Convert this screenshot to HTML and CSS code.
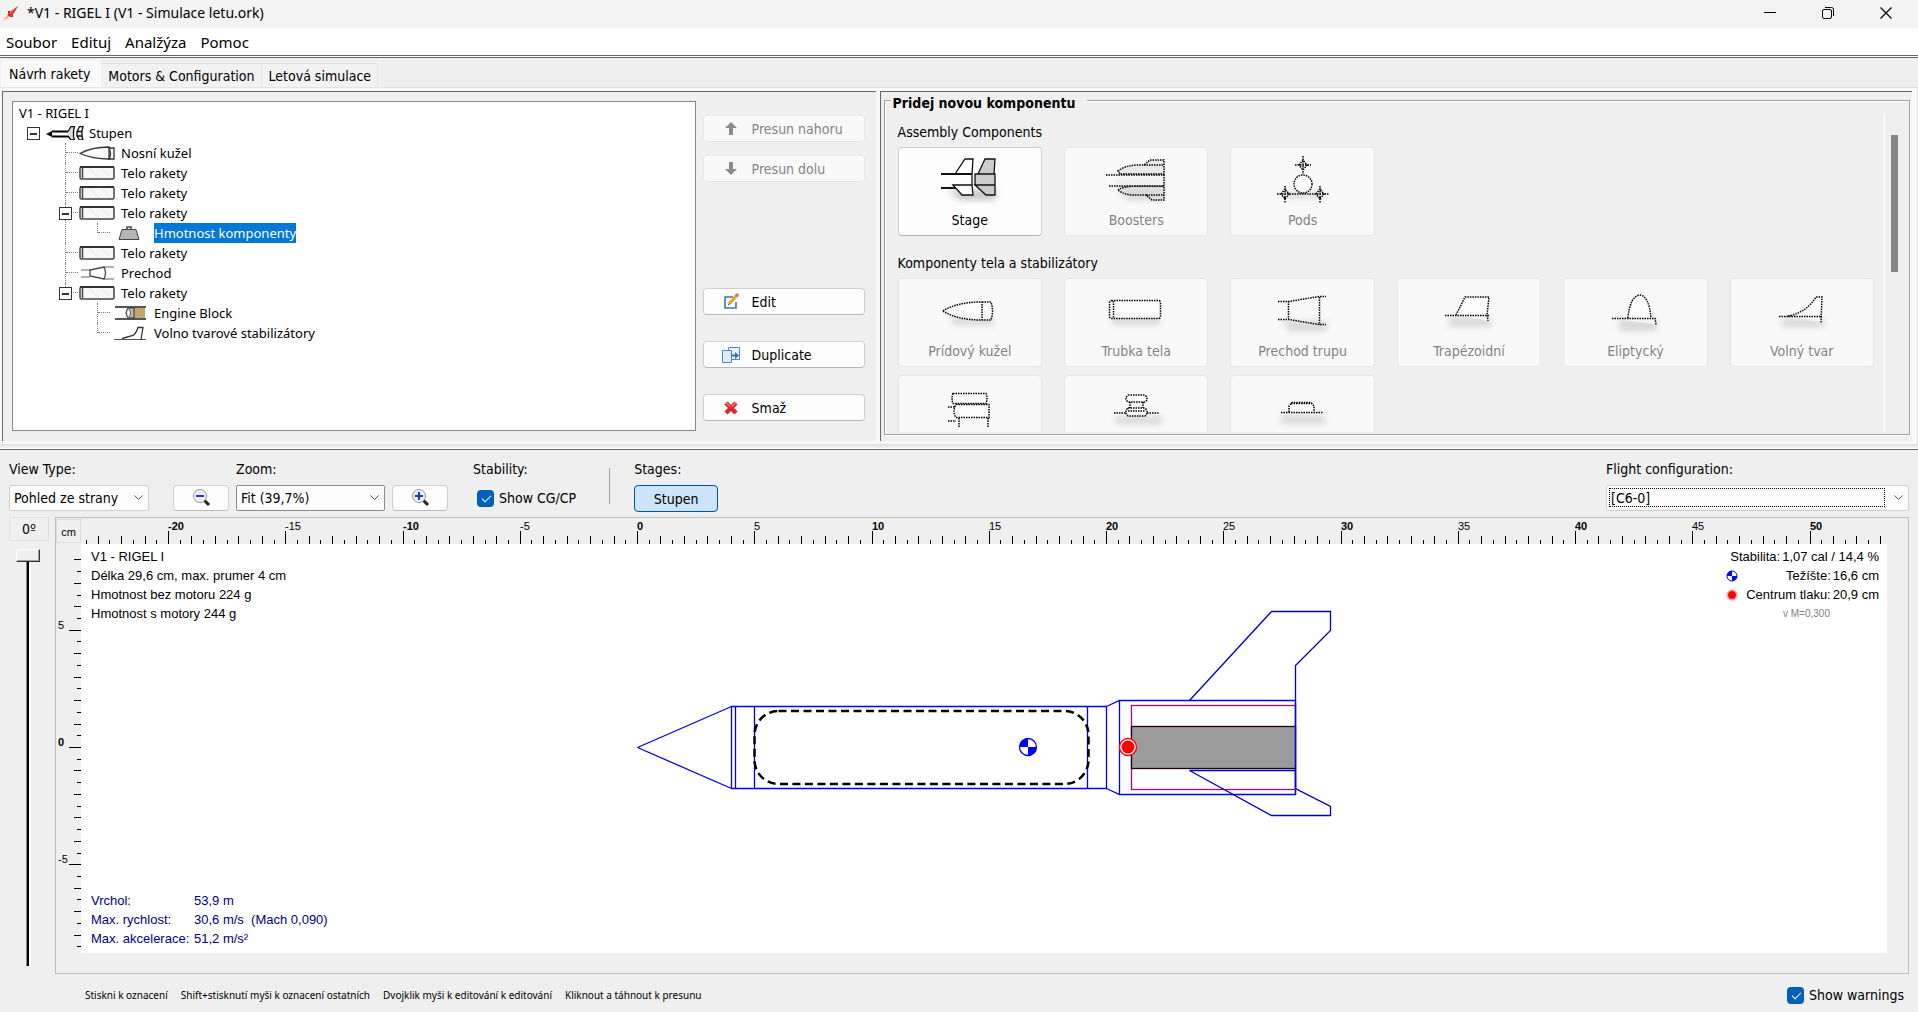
FILE: index.html
```html
<!DOCTYPE html>
<html lang="cs">
<head>
<meta charset="utf-8">
<title>*V1 - RIGEL I (V1 - Simulace letu.ork)</title>
<link rel="stylesheet" href="styles.css">
</head>
<body>
<header class="titlebar">
  <svg class="app-icon" width="16" height="16" viewBox="0 0 16 16"><path d="M15 1 L9 5 L4 10 L7 12 L11 8Z" fill="#e0261c"/><path d="M12 3l-5 6" stroke="#f9b0a0" stroke-width="1"/><path d="M5 6l3 0-3 3zM10 9v3l-3 0z" fill="#c2281c"/><path d="M4 11l-4 5 6-4z" fill="#f6a13a"/></svg>
  <h1 class="window-title">*V1 - RIGEL I (V1 - Simulace letu.ork)</h1>
  <div class="window-controls">
    <button class="window-btn" aria-label="Minimalizovat"><svg width="12" height="12"><path d="M0 5.500h12" stroke="#000"/></svg></button>
    <button class="window-btn" aria-label="Obnovit"><svg width="12" height="12" fill="none" stroke="#000"><rect x=".5" y="2.500" width="9" height="9" rx="1.500"/><path d="M3 .5h6.500a2 2 0 0 1 2 2v6.500"/></svg></button>
    <button class="window-btn" aria-label="Zavřít"><svg width="12" height="12"><path d="M.5.5l11 11M11.500.5l-11 11" stroke="#000" stroke-width="1.200"/></svg></button>
  </div>
</header>
<nav class="menubar">
  <a href="#">Soubor</a><a href="#">Edituj</a><a href="#">Analžýza</a><a href="#">Pomoc</a>
</nav>
<div class="tabs" role="tablist">
  <button class="tab tab-active" role="tab" aria-selected="true">Návrh rakety</button>
  <button class="tab" role="tab">Motors &amp; Configuration</button>
  <button class="tab" role="tab">Letová simulace</button>
</div>

<svg class="symbols" aria-hidden="true">
  <symbol id="tube" viewBox="0 0 36 14"><rect x="1" y="1" width="34" height="12" rx="1.500" fill="#f7f7f7" stroke="#444" stroke-width="1.500"/><path d="M1 1h34" stroke="#333" stroke-width="2"/><path d="M3.500 2v10" stroke="#444" stroke-width="1.500"/><path d="M10 2l10 10M22 2l8 8" stroke="#e4e4e4"/></symbol>
</svg>

<main class="design">
  <section class="panel structure">
    <div class="tree-box">
      <p class="tree-root">V1 - RIGEL I</p>
      <ul class="tree">
        <li>
          <div class="node"><button class="expander" aria-label="Sbalit"></button><svg class="node-icon wide" width="38" height="14" viewBox="0 0 38 14"><path d="M0 8l6-3v6z"/><path d="M4 8h2M6 5.500h17M6 10.500h17" stroke="#000" stroke-width="2" fill="none"/><path d="M22 5.500l3-5h3.500l-1 4.500v6l1 3H25l-3-4" fill="#ddd" stroke="#111" stroke-width="1.300"/><path d="M31 5.500l2.500-5H37l-1 4.500v5l1 4h-3.500l-2.500-4zM31 5.500h5M31 10h5" fill="#eee" stroke="#111" stroke-width="1.300"/></svg><span class="node-label">Stupen</span></div>
          <ul>
            <li><div class="node"><svg class="node-icon" width="36" height="14" viewBox="0 0 36 14" fill="#fafafa" stroke="#333"><path d="M1 7.500C9 3 20 1 30 1v12C20 13 9 11 1 7.500z" stroke-width="1.300"/><path d="M30 2h5v11h-5q3-5 0-11" stroke-width="1.300"/></svg><span class="node-label">Nosní kužel</span></div></li>
            <li><div class="node"><svg class="node-icon" width="36" height="14"><use href="#tube"/></svg><span class="node-label">Telo rakety</span></div></li>
            <li><div class="node"><svg class="node-icon" width="36" height="14"><use href="#tube"/></svg><span class="node-label">Telo rakety</span></div></li>
            <li>
              <div class="node"><button class="expander" aria-label="Sbalit"></button><svg class="node-icon" width="36" height="14"><use href="#tube"/></svg><span class="node-label">Telo rakety</span></div>
              <ul>
                <li><div class="node"><svg class="node-icon" width="34" height="14" viewBox="0 0 34 14"><path d="M9 3.500h14l3 10H6z" fill="#b5b5b5" stroke="#444"/><path d="M14 3V1h4v2" fill="none" stroke="#444" stroke-width="1.500"/></svg><span class="node-label node-selected">Hmotnost komponenty</span></div></li>
              </ul>
            </li>
            <li><div class="node"><svg class="node-icon" width="36" height="14"><use href="#tube"/></svg><span class="node-label">Telo rakety</span></div></li>
            <li><div class="node"><svg class="node-icon" width="36" height="14" viewBox="0 0 36 14" fill="none"><path d="M2 4h9M2 11h9M24 1h11M24 13h11" stroke="#999" stroke-width="1.500"/><path d="M11 4l14-3q3 6 0 12l-14-3z" fill="#fff" stroke="#444" stroke-width="1.300"/></svg><span class="node-label">Prechod</span></div></li>
            <li>
              <div class="node"><button class="expander" aria-label="Sbalit"></button><svg class="node-icon" width="36" height="14"><use href="#tube"/></svg><span class="node-label">Telo rakety</span></div>
              <ul>
                <li><div class="node"><svg class="node-icon" width="34" height="14" viewBox="0 0 34 14"><path d="M2 1h31M2 13h31" stroke="#555" stroke-width="2"/><path d="M17 2h15v10H17z" fill="#c3a56b"/><path d="M15 2h6v10h-6q-4-5 0-10z" fill="#bbb" stroke="#333"/><ellipse cx="15.500" cy="7" rx="2" ry="4" fill="#fff" stroke="#555"/></svg><span class="node-label">Engine Block</span></div></li>
                <li><div class="node"><svg class="node-icon" width="34" height="14" viewBox="0 0 34 14" fill="none" stroke="#333"><path d="M1 13.500h32" stroke="#555"/><path d="M9 12.500l11-3q3-2 5-8h5l-2 12" stroke-width="1.300"/></svg><span class="node-label">Volno tvarové stabilizátory</span></div></li>
              </ul>
            </li>
          </ul>
        </li>
      </ul>
    </div>
    <div class="actions">
      <button class="btn action" disabled><svg width="18" height="18" viewBox="0 0 18 18"><path d="M9 2l6 6h-4v7H7V8H3z" fill="#8c8c8c"/></svg>Presun nahoru</button>
      <button class="btn action" disabled><svg width="18" height="18" viewBox="0 0 18 18"><path d="M9 15L3 9h4V2h4v7h4z" fill="#8c8c8c"/></svg>Presun dolu</button>
      <button class="btn action action-edit"><svg width="18" height="18" viewBox="0 0 18 18" fill="none"><path d="M14 9v6H3V4h8" stroke="#3b76b5" stroke-width="1.600"/><path d="M7 11l8-9" stroke="#e9a31c" stroke-width="3"/><path d="M14.500 3L16 1" stroke="#e06a5a" stroke-width="3"/><path d="M6 12l1.500-1" stroke="#444"/></svg>Edit</button>
      <button class="btn action action-duplicate"><svg width="18" height="18" viewBox="0 0 18 18"><path d="M6.500 1.500h11v12h-11z" fill="#eaf3fc" stroke="#4f86bd"/><path d="M.5 4.500h9v12h-9z" fill="#dcebf9" stroke="#4f86bd"/><path d="M9 8.500h4V6l4 3.500-4 3.500v-2.500H9z" fill="#2f6fe0"/></svg>Duplicate</button>
      <button class="btn action action-delete"><svg width="18" height="18" viewBox="0 0 18 18"><path d="M4 4l10 10M14 4L4 14" stroke="#d92a2a" stroke-width="4.500"/><path d="M4 3.500l4 4M14 3.500l-4 4" stroke="#f07a7a" stroke-width="1.500"/></svg>Smaž</button>
    </div>
  </section>

  <section class="panel palette">
    <div class="group">
      <h2 class="group-title">Pridej novou komponentu</h2>
      <div class="palette-scroll">
        <div class="palette-body">
          <h3 class="palette-heading">Assembly Components</h3>
          <div class="palette-grid">
            <button class="btn part"><svg width="64" height="52" viewBox="0 0 64 52"><path class="shade" d="M10 36h24l24-2v12H22z"/><g fill="#fff" stroke="#111" stroke-width="1.300"><path d="M17 20L27 5h8l-1 15zM15 31l9 10h11l-1-10z"/><path d="M3 20h31M3 34h15" stroke-width="2"/><path d="M34 20v11" /></g><g fill="#ccc" stroke="#111" stroke-width="1.300"><path d="M40 20l7-15h10l-1 15zM37 31l11 10h9V31zM37 20h20v11H37z"/></g></svg>Stage</button>
            <button class="btn part" disabled><svg width="64" height="52" viewBox="0 0 64 52"><path class="shade" d="M6 22h54v24H22z"/><g class="dots"><path fill="#ddd" d="M14 17q8-6 20-6l6 0 6-5h14v14H16zM14 36q6-4 20-4h26v14H48l-6-5H30q-10 0-16-5z"/><path d="M2 21h58v11H4M40 11h20M42 41h18"/></g></svg>Boosters</button>
            <button class="btn part" disabled><svg width="64" height="52" viewBox="0 0 64 52"><path class="shade" d="M14 38h36v6H14z"/><g class="dots"><circle cx="32" cy="30" r="9"/><path d="M32 2v18M24 11h16M28 11l4-5 4 5-4 5zM6 40h52M14 32v17M49 32v17M10 40l4-5 4 5-4 5zM45 40l4-5 4 5-4 5z"/></g></svg>Pods</button>
          </div>
          <h3 class="palette-heading">Komponenty tela a stabilizátory</h3>
          <div class="palette-grid">
            <button class="btn part" disabled><svg width="64" height="52" viewBox="0 0 64 52"><path class="shade" d="M14 32h42v8H14z"/><g class="dots"><path d="M5 26q14-9 39-9v18q-25 0-39-9zM44 17h9q3 9 0 18h-9"/></g></svg>Prídový kužel</button>
            <button class="btn part" disabled><svg width="64" height="52" viewBox="0 0 64 52"><path class="shade" d="M8 32h48v8H8z"/><g class="dots"><rect x="5.500" y="15.500" width="51" height="18" rx="2"/><path d="M9.500 16v17"/></g></svg>Trubka tela</button>
            <button class="btn part" disabled><svg width="64" height="52" viewBox="0 0 64 52"><path class="shade" d="M12 36h44v10H18z"/><g class="dots"><path d="M7 16.500h11l30-5h7M7 34.500h11l30 5h7"/><path d="M17.500 16v18M48.500 12v28"/></g></svg>Prechod trupu</button>
            <button class="btn part" disabled><svg width="64" height="52" viewBox="0 0 64 52"><path class="shade" d="M12 32h42v10H12z"/><g class="dots"><path d="M8 30.500h44M19 30l9-18h24l-2 18 1 6"/></g></svg>Trapézoidní</button>
            <button class="btn part" disabled><svg width="64" height="52" viewBox="0 0 64 52"><path class="shade" d="M16 34h38v12H16z"/><g class="dots"><path d="M9 33.500h43l1 6M25 33q2-22 12-23 9 1 11 23"/></g></svg>Eliptycký</button>
            <button class="btn part" disabled><svg width="64" height="52" viewBox="0 0 64 52"><path class="shade" d="M12 33h42v9H12z"/><g class="dots"><path d="M9 31.500h43M18 31q18-3 28-19h6l-1 26"/></g></svg>Volný tvar</button>
            <button class="btn part" disabled aria-label="Objímka"><svg width="64" height="52" viewBox="0 0 64 52"><g class="dots"><path d="M15 11.500h33q2 5 0 10H15q-2-5 0-10zM18 22.500h33v13H18q-4-6 0-13zM21 36v10M50 36v10M10 25h7M10 39h8"/></g></svg></button>
            <button class="btn part" disabled aria-label="Vodítko"><svg width="64" height="52" viewBox="0 0 64 52"><path class="shade" d="M12 34h46v8H12z"/><g class="dots"><path d="M24 13h17q4 4 0 7H24q-4-3 0-7zM26 20v6M39 20v6M24 26h17q4 4 0 8H24q-4-4 0-8zM10 31h12M43 31h12M24 29h17"/></g></svg></button>
            <button class="btn part" disabled aria-label="Úchyt"><svg width="64" height="52" viewBox="0 0 64 52"><path class="shade" d="M10 33h44v9H10z"/><g class="dots"><path d="M10 30.500h42M18 30v-6l3-3.500h19l3 3.500v6M20 21.500h21"/></g></svg></button>
          </div>
        </div>
        <div class="scroll-rail"><div class="scroll-thumb"></div></div>
      </div>
    </div>
  </section>
</main>

<section class="view">
  <div class="toolbar">
    <div class="field view-type">
      <label for="view-type">View Type:</label>
      <div class="combo"><select id="view-type"><option>Pohled ze strany</option></select><svg width="9" height="6"><path d="M.5.5l4 4 4-4" fill="none" stroke="#555"/></svg></div>
    </div>
    <div class="zoom">
      <label for="zoom">Zoom:</label>
      <button class="btn zoom-btn zoom-out" aria-label="Oddálit"><svg width="20" height="20" viewBox="0 0 20 20"><path d="M13 12l5 5" stroke="#222" stroke-width="3"/><circle cx="9" cy="8" r="6.500" fill="#eef0f6" stroke="#999"/><path d="M5 8h8" stroke="#2136a8" stroke-width="2"/></svg></button>
      <div class="combo combo-strong"><select id="zoom"><option>Fit (39,7%)</option></select><svg width="9" height="6"><path d="M.5.5l4 4 4-4" fill="none" stroke="#555"/></svg></div>
      <button class="btn zoom-btn" aria-label="Přiblížit"><svg width="20" height="20" viewBox="0 0 20 20"><path d="M13 12l5 5" stroke="#222" stroke-width="3"/><circle cx="9" cy="8" r="6.500" fill="#eef0f6" stroke="#999"/><path d="M5 8h8M9 4v8" stroke="#2136a8" stroke-width="2"/></svg></button>
    </div>
    <div class="field stability">
      <span>Stability:</span>
      <label class="check"><input type="checkbox" checked>Show CG/CP</label>
    </div>
    <div class="separator"></div>
    <div class="field stages">
      <span>Stages:</span>
      <button class="btn stage-toggle" aria-pressed="true">Stupen</button>
    </div>
    <div class="field flight">
      <label for="flight">Flight configuration:</label>
      <div class="combo combo-focus"><select id="flight"><option>[C6-0]</option></select><svg width="9" height="6"><path d="M.5.5l4 4 4-4" fill="none" stroke="#555"/></svg></div>
    </div>
  </div>

  <div class="workspace">
    <div class="rotation">
      <output class="angle" for="angle">0º</output>
      <input id="angle" class="angle-slider" type="range" min="0" max="360" value="0" aria-label="Rotace">
    </div>
    <div class="canvas-frame">
      <div class="unit">cm</div>
      <svg class="ruler ruler-h" id="ruler-h"></svg>
      <svg class="ruler ruler-v" id="ruler-v"></svg>
      <div class="canvas">
        <svg class="rocket" fill="none" stroke="#0000f0" stroke-width="1.300">
          <path d="M556.500 203.500L650.500 162.500M556.500 203.500L650.500 244.500M650.500 162.500H1025.500V244.500H650.500zM654.500 162.500V244.500M673.500 162.500V244.500M1006.500 162.500V244.500"/>
          <path d="M1025.500 162.500L1038.500 156.500H1214.500V250.500H1038.500L1025.500 244.500M1038.500 156.500V250.500"/>
          <rect x="673.500" y="167" width="334" height="73" rx="24" stroke="#000" stroke-width="2.500" stroke-dasharray="8 4.500"/>
          <rect x="1050.500" y="161.500" width="164" height="84" stroke="#a0106a"/>
          <rect x="1050.500" y="182.500" width="164" height="42" fill="#9b9b9b" stroke="#200018"/>
          <path stroke="#0000c4" d="M1108.500 156.500L1190.500 67.500H1249.500V86.500L1214.500 121.500V156.500M1108.500 226.500L1190.500 271.500H1249.500V262.500L1214.500 244.500V226.500z"/>
          <path stroke="#0000f0" d="M1214.500 156.500V250.500"/>
          <circle cx="947" cy="203" r="8.500" fill="#fff"/><path d="M947 203v-8.500a8.500 8.500 0 0 0-8.500 8.500zM947 203v8.500a8.500 8.500 0 0 0 8.500-8.500z" fill="#00f" stroke="none"/>
          <circle cx="1047" cy="203" r="8.500" fill="#fff" stroke="#f00"/><circle cx="1047" cy="203" r="6.500" fill="#f00" stroke="none"/>
        </svg>
        <div class="summary"><p>V1 - RIGEL I</p><p>Délka 29,6 cm, max. prumer 4 cm</p><p>Hmotnost bez motoru 224 g</p><p>Hmotnost s motory 244 g</p></div>
        <div class="stability-info">
          <p>Stabilita:<b>1,07 cal / 14,4 %</b></p>
          <p><svg width="12" height="12"><circle cx="6" cy="6" r="5" fill="#fff" stroke="#00f"/><path d="M6 6V1a5 5 0 0 0-5 5zM6 6v5a5 5 0 0 0 5-5z" fill="#00f"/></svg>Težíšte: <b>16,6 cm</b></p>
          <p><svg width="12" height="12"><circle cx="6" cy="6" r="5" fill="#fff" stroke="#f77"/><circle cx="6" cy="6" r="4" fill="#f00"/></svg>Centrum tlaku:<b>20,9 cm</b></p>
          <p class="mach">v M=0,300</p>
        </div>
        <dl class="flight-info">
          <dt>Vrchol:</dt><dd>53,9 m</dd>
          <dt>Max. rychlost:</dt><dd>30,6 m/s&nbsp; (Mach 0,090)</dd>
          <dt>Max. akcelerace:</dt><dd>51,2 m/s²</dd>
        </dl>
      </div>
    </div>
  </div>
</section>

<footer class="statusbar">
  <div class="hints"><span>Stiskni k oznacení</span><span>Shift+stisknutí myši k oznacení ostatních</span><span>Dvojklik myši k editování k editování</span><span>Kliknout a táhnout k presunu</span></div>
  <label class="check"><input type="checkbox" checked>Show warnings</label>
</footer>
<script src="rulers.js"></script>
</body>
</html>
```
FILE: styles.css
```css
* { box-sizing: border-box; }
body {
  margin: 0;
  min-height: 100vh;
  display: flex;
  flex-direction: column;
  background: #efefef;
  color: #000;
  font: 14px/20px "DejaVu Sans Condensed", "Noto Sans", sans-serif;
}
button, select, input { font: inherit; color: inherit; margin: 0; }
h1, h2, h3, p, ul, dl, dd { margin: 0; padding: 0; }
ul { list-style: none; }
svg { display: block; flex: none; }
.symbols { position: absolute; width: 0; height: 0; }

/* Window chrome */
.titlebar { display: flex; align-items: center; height: 28px; padding: 0 3px 2px; background: #f3f3f3; }
.window-title { margin-left: 8px; font: 14px/20px "Noto Sans", sans-serif; }
.window-controls { display: flex; margin-left: auto; }
.window-btn { display: grid; place-items: center; width: 58px; height: 26px; padding: 0; border: 0; background: none; }
.menubar {
  display: flex;
  gap: 14px;
  height: 30px;
  padding: 4px 6px;
  background: #fff;
  border-bottom: 3px double #666;
  font: 15px/20px "Noto Sans", sans-serif;
}
.menubar a { color: #000; text-decoration: none; }
.tabs { display: flex; align-items: flex-end; height: 29px; padding-left: 1px; }
.tab { height: 24px; padding: 0 6px 0 7px; border: 1px solid #e2e2e2; border-width: 1px 1px 0 0; background: #f2f2f2; }
.tab-active { height: 27px; padding: 0 10px 0 8px; border-color: #f9f9f9; background: #f9f9f9; }

/* Upper half */
.design {
  display: grid;
  grid-template-columns: 875fr 1034fr;
  gap: 4px;
  padding: 3px 5px 3px 2px;
  border: 1px solid #e3e3e3;
  border-width: 1px 1px 2px 0;
  background: #f9f9f9;
}
.panel { min-width: 0; height: 350px; border: 1px solid #666; border-width: 1px 0 0 1px; background: #efefef; }
.structure { display: flex; gap: 7px; padding: 9px 11px 10px 9px; }
.tree-box { flex: 1; padding: 1px 6px; border: 1px solid #828790; background: #fff; font: 13px/20px "Noto Sans", sans-serif; }
.tree { padding-left: 8px; }
.tree li { position: relative; }
.tree ul { padding-left: 32px; }
.node { display: flex; align-items: center; height: 20px; padding-left: 19px; position: relative; }
.tree ul .node { padding-left: 20px; }
.tree ul li::before { content: ""; position: absolute; left: 6px; top: 0; bottom: 0; border-left: 1px dotted #808080; }
.tree ul li:last-child::before { bottom: auto; height: 10px; }
.tree ul .node::before { content: ""; position: absolute; left: 7px; top: 9px; width: 12px; border-top: 1px dotted #808080; }
.node-icon { width: 36px; margin-right: 6px; }
.node-icon.wide { width: 38px; margin-right: 5px; }
.tree ul ul .node { padding-left: 22px; }
.tree ul ul .node-icon { width: 34px; margin-right: 7px; }
.node-selected { background: #0078d7; color: #fff; }
.expander { position: absolute; left: 0; top: 4px; width: 13px; height: 13px; padding: 0; border: 1px solid #333; background: linear-gradient(#333, #333) center/7px 2px no-repeat #fff; }

.btn { border: 1px solid #d0d0d0; border-bottom-color: #b8b8b8; border-radius: 4px; background: #fdfdfd; padding: 0; }
.btn:disabled { border-color: #e6e6e6; background: #f9f9f9; color: #838383; }
.actions { display: flex; flex-direction: column; gap: 13px; width: 162px; padding-top: 14px; }
.action { display: flex; align-items: center; gap: 12px; height: 27px; padding-left: 18px; }
.action-edit { margin-top: 93px; }
.action-duplicate, .action-delete { margin-top: 13px; }

.palette { padding: 8px 2px 5px 3px; }
.group { height: 335px; border: 1px solid #a0a0a0; box-shadow: inset 1px 1px #fff, 1px 1px #fff; }
.group-title { position: relative; width: fit-content; height: 20px; margin: -8px 0 0 6px; padding: 0 12px 0 2px; background: #efefef; font-size: 14px; line-height: 20px; }
.palette-scroll { display: flex; height: 319px; overflow: hidden; }
.palette-body { flex: 1; min-width: 0; padding: 9px 10px 0 13px; }
.palette-heading { margin-bottom: 5px; font-size: 14px; line-height: 20px; font-weight: normal; }
.palette-grid { display: grid; grid-template-columns: repeat(6, 1fr); gap: 8px 22px; margin-bottom: 17px; }
.part { display: flex; flex-direction: column; align-items: center; height: 89px; padding-top: 6px; gap: 4px; }
.shade { fill: #777; opacity: .4; filter: blur(3px); }
.part:disabled .shade { opacity: .25; }
.dots { fill: #fff; fill-opacity: .6; stroke: #000; stroke-width: 1.5; stroke-dasharray: 1.5 1; }
.scroll-rail { width: 25px; padding: 22px 0 0 6px; border-left: 1px solid #fff; }
.scroll-thumb { width: 7px; height: 137px; background: #858585; }

/* Lower half */
.view { flex: 1; display: flex; flex-direction: column; margin-top: 3px; border-top: 1px solid #666; box-shadow: 0 -1px #f9f9f9; }
.toolbar { display: flex; padding: 9px 9px 6px; }
.field { display: flex; flex-direction: column; gap: 6px; }
.view-type { width: 140px; }
.combo { position: relative; height: 26px; }
.combo select { width: 100%; height: 26px; padding: 0 4px; border: 1px solid #d0d0d0; border-radius: 2px; background: #fdfdfd; appearance: none; }
.combo svg { position: absolute; right: 6px; top: 10px; pointer-events: none; }
.combo-strong select { border-color: #8a8a8a; }
.combo-focus::after { content: ""; position: absolute; inset: 3px 24px 4px 3px; border: 1px dotted #000; pointer-events: none; }
.zoom { display: grid; grid-template-columns: 56px 149px 56px; gap: 6px 7px; margin-left: 24px; align-content: start; }
.zoom label { grid-column: 2 / 4; }
.zoom-out { grid-column: 1; }
.zoom-btn { display: grid; place-items: center; height: 26px; }
.stability { margin-left: 25px; }
.check { display: flex; align-items: center; gap: 5px; }
.stability .check { height: 26px; padding-left: 4px; }
.check input { position: relative; width: 17px; height: 17px; border-radius: 4px; background: #005fb8; appearance: none; }
.check input:checked::after { content: ""; position: absolute; left: 5px; top: 5px; width: 8px; height: 4px; border: solid #fff; border-width: 0 0 1px 1px; transform: rotate(-45deg); }
.separator { width: 1px; height: 36px; margin: 9px 24px 0 33px; background: #a0a0a0; }
.stage-toggle { width: 84px; height: 27px; margin-bottom: -1px; border-color: #005494; background: #cce4f7; }
.flight { width: 303px; margin-left: auto; }

.workspace { flex: 1; display: flex; gap: 6px; padding: 0 9px; }
.rotation { display: flex; flex-direction: column; width: 40px; }
.angle { height: 24px; border: 1px solid #e0e0e0; text-align: center; line-height: 22px; }
.angle-slider { flex: 1; width: 24px; margin: 8px 0 8px 7px; appearance: none; writing-mode: vertical-lr; background: linear-gradient(90deg, transparent 10px, #888 10px 11px, #000 11px 13px, #fff 13px 15px, transparent 15px); }
.angle-slider::-webkit-slider-thumb { appearance: none; width: 24px; height: 13px; border: 1px solid; border-color: #fff #333 #333 #fff; box-shadow: inset -1px -1px #a0a0a0; background: #efefef; }
.canvas-frame { flex: 1; display: grid; grid-template: 26px 1fr / 25px 1fr; padding: 0 21px 20px 0; border: 1px solid #bdbdbd; }
.unit { margin: 1px 0; border: 1px solid #dcdcdc; text-align: center; font: 11px/24px "Liberation Sans", sans-serif; }
.ruler { width: 100%; height: 100%; font: 11px "Liberation Sans", sans-serif; }
.ruler .major { font-weight: bold; }
.canvas { position: relative; overflow: hidden; background: #fff; font: 13px/19px "Liberation Sans", sans-serif; }
.rocket { position: absolute; width: 100%; height: 100%; }
.summary { position: absolute; left: 10px; top: 3px; }
.stability-info { position: absolute; right: 8px; top: 3px; text-align: right; }
.stability-info p { display: flex; align-items: center; justify-content: flex-end; gap: 2px; }
.stability-info b { font-weight: normal; }
.stability-info svg { margin: 0 auto 0 -4px; }
.stability-info .mach { padding-right: 49px; color: #808080; font-size: 10px; }
.flight-info { position: absolute; left: 10px; bottom: 5px; display: grid; grid-template-columns: 103px auto; color: #000080; }

.statusbar { display: flex; align-items: center; justify-content: space-between; height: 38px; padding: 4px 14px 0 85px; }
.hints { display: flex; gap: 13px; font: 10px/20px "Noto Sans", sans-serif; }
```
FILE: rulers.js
```js
// Draws the centimetre rulers along the top and left edges of the canvas.
const NS = 'http://www.w3.org/2000/svg';
const PX_PER_CM = 23.45;

function add(svg, name, attrs, text) {
  const el = document.createElementNS(NS, name);
  for (const key in attrs) el.setAttribute(key, attrs[key]);
  if (text !== undefined) el.textContent = text;
  svg.appendChild(el);
}

function drawRuler(svg, origin, vertical) {
  const box = svg.getBoundingClientRect();
  const length = vertical ? box.height : box.width;
  const depth = vertical ? box.width : box.height;
  const first = Math.ceil((4 - origin) / PX_PER_CM * 2);
  const last = Math.floor((length - 4 - origin) / PX_PER_CM * 2);
  for (let i = first; i <= last; i++) {
    const pos = Math.round(origin + i * PX_PER_CM / 2);
    const size = i % 10 === 0 ? (vertical ? 12 : 13) : i % 2 === 0 ? (vertical ? 7 : 8) : 4;
    add(svg, 'rect', vertical
      ? { x: depth - size, y: pos, width: size, height: 1 }
      : { x: pos, y: depth - size, width: 1, height: size });
    if (i % 10 === 0) {
      const value = (vertical ? -i : i) / 2;
      add(svg, 'text', {
        x: vertical ? 2 : pos,
        y: vertical ? pos - 1 : 12,
        class: value % 10 === 0 ? 'major' : 'minor'
      }, String(value));
    }
  }
}

drawRuler(document.getElementById('ruler-h'), 556, false);
drawRuler(document.getElementById('ruler-v'), 203, true);
```
